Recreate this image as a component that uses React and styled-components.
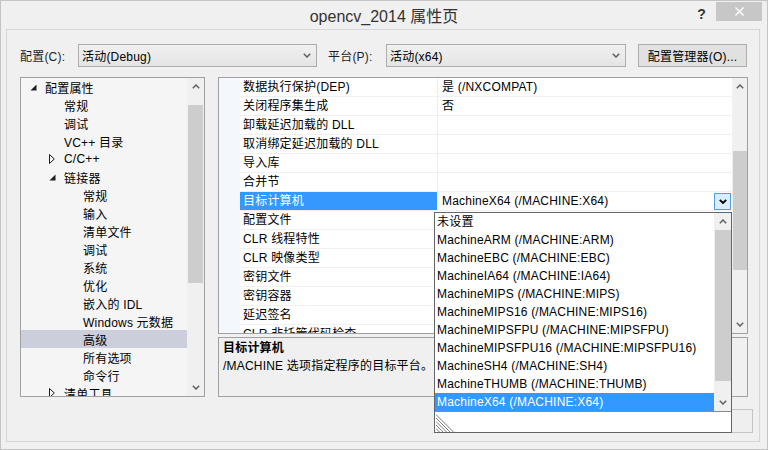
import React from 'react';
import styled, { createGlobalStyle } from 'styled-components';

const FONT = `"Liberation Sans", "Noto Sans CJK SC", sans-serif`;

const Global = createGlobalStyle`
  html, body { margin: 0; padding: 0; background: #f0f0f0; }
  body { font-family: ${FONT}; font-size: 12px; color: #000; letter-spacing: 0.2px; }
  * { box-sizing: border-box; }
`;

const Window = styled.div`
  position: relative;
  width: 768px;
  height: 450px;
  background: #f0f0f0;
  border: 1px solid #c4c4c4;
  display: flex;
  flex-direction: column;
  overflow: hidden;
`;

const TitleBar = styled.div`
  flex: none;
  height: 28px;
  display: grid;
  grid-template-columns: 1fr auto 1fr;
  align-items: start;
`;

const Title = styled.div`
  grid-column: 2;
  font-size: 16px;
  line-height: 20px;
  padding-top: 6px;
  color: #333;
  letter-spacing: 0;
  white-space: nowrap;
`;

const TitleControls = styled.div`
  grid-column: 3;
  justify-self: end;
  display: flex;
  align-items: flex-start;
  padding-top: 1px;
  padding-right: 5px;
`;

const HelpMark = styled.div`
  font-size: 14px;
  font-weight: bold;
  line-height: 18px;
  color: #333;
  margin-right: 10px;
  padding-top: 3px;
`;

const CloseBtn = styled.div`
  width: 46px;
  height: 19px;
  background: #c7c7c7;
  display: flex;
  align-items: center;
  justify-content: center;
`;

const Content = styled.div`
  flex: none;
  height: 413px;
  margin: 0 7px 0 5px;
  border: 1px solid #d6d6d6;
  padding: 14px 6px 0 13px;
  display: flex;
  flex-direction: column;
`;

const TopRow = styled.div`
  display: flex;
  align-items: center;
  height: 23px;
  margin-right: 5px;
`;

const Label = styled.div`
  width: ${p => p.$w}px;
  padding-left: ${p => p.$pl || 0}px;
  flex: none;
  color: #1e1e1e;
  white-space: nowrap;
`;

const Combo = styled.div`
  width: ${p => p.$w}px;
  height: 23px;
  flex: none;
  border: 1px solid #acacac;
  background: linear-gradient(#f0f0f0, #e5e5e5);
  display: flex;
  align-items: center;
  padding: 0 5px 0 3px;
`;

const ComboText = styled.div`
  flex: 1;
  white-space: nowrap;
`;

const PushButton = styled.div`
  width: ${p => p.$w}px;
  height: ${p => p.$h || 23}px;
  margin-left: ${p => p.$ml || 0}px;
  flex: none;
  border: 1px solid ${p => (p.$disabled ? '#c4c4c4' : '#adadad')};
  background: ${p => (p.$disabled ? '#efefef' : '#e1e1e1')};
  color: ${p => (p.$disabled ? '#a0a0a0' : '#000')};
  display: flex;
  align-items: center;
  justify-content: center;
  white-space: nowrap;
`;

const Main = styled.div`
  display: flex;
  margin-top: 10px;
  margin-right: 5px;
  height: 320px;
`;

const TreeBox = styled.div`
  width: 185px;
  height: 320px;
  flex: none;
  border: 1px solid #a0a0a0;
  background: #f5f5f5;
  display: flex;
`;

const TreeBody = styled.div`
  flex: 1;
  overflow: hidden;
`;

const TreeRow = styled.div`
  height: 18px;
  display: flex;
  align-items: center;
  padding-left: ${p => 9 + p.$level * 19}px;
  background: ${p => (p.$sel ? '#cccedb' : 'transparent')};
  white-space: nowrap;
`;

const Twisty = styled.div`
  width: 15px;
  flex: none;
  display: flex;
  align-items: center;
`;

const ScrollBar = styled.div`
  width: ${p => p.$w}px;
  flex: none;
  display: flex;
  flex-direction: column;
  background: #f0f0f0;
`;

const ScrollArrow = styled.div`
  height: 17px;
  flex: none;
  display: flex;
  align-items: center;
  justify-content: center;
`;

const ScrollTrack = styled.div`
  flex: 1;
  display: flex;
  flex-direction: column;
  align-items: center;
`;

const Thumb = styled.div`
  width: ${p => p.$w}px;
  margin-top: ${p => p.$top}px;
  height: ${p => p.$size}px;
  background: #cdcdcd;
`;

const RightCol = styled.div`
  width: 530px;
  margin-left: 13px;
  display: flex;
  flex-direction: column;
`;

const GridBox = styled.div`
  height: 257px;
  border: 1px solid #a0a0a0;
  background: #fff;
  display: flex;
`;

const GridMargin = styled.div`
  width: 21px;
  flex: none;
  background: #f4f7fc;
`;

const GridRows = styled.div`
  flex: 1;
  overflow: hidden;
`;

const GridRow = styled.div`
  display: grid;
  grid-template-columns: 198px 1fr;
  height: 19px;
`;

const NameCell = styled.div`
  border-bottom: 1px solid #f0f0f0;
  border-right: 1px solid #f0f0f0;
  padding-left: 3px;
  line-height: 18px;
  white-space: nowrap;
  overflow: hidden;
  background: ${p => (p.$sel ? '#3399ff' : 'transparent')};
  color: ${p => (p.$sel ? '#fff' : '#000')};
`;

const ValueCell = styled.div`
  border-bottom: 1px solid #f0f0f0;
  padding-left: 4px;
  display: flex;
  align-items: center;
  white-space: nowrap;
  overflow: hidden;
`;

const ValueText = styled.div`
  flex: 1;
  line-height: 18px;
`;

const DropBtn = styled.div`
  width: 17px;
  height: 17px;
  margin-right: 1px;
  margin-top: 1px;
  border: 1px solid #569de5;
  background: #dcecfc;
  display: flex;
  align-items: center;
  justify-content: center;
`;

const Desc = styled.div`
  margin-top: 3px;
  height: 60px;
  border: 1px solid #a0a0a0;
  padding: 1px 4px;
  line-height: 18px;
`;

const DescTitle = styled.div`
  font-weight: bold;
`;

const ButtonRow = styled.div`
  display: flex;
  justify-content: flex-end;
  gap: 9px;
  margin-top: 12px;
`;

const DropList = styled.div`
  position: absolute;
  left: 433px;
  top: 211px;
  width: 298px;
  height: 221px;
  border: 1px solid #646464;
  background: #fff;
  display: flex;
  flex-direction: column;
`;

const DropMain = styled.div`
  height: 198px;
  flex: none;
  display: flex;
`;

const DropItems = styled.div`
  flex: 1;
`;

const DropItem = styled.div`
  height: 18px;
  line-height: 18px;
  padding-left: 2px;
  white-space: nowrap;
  background: ${p => (p.$sel ? '#3399ff' : 'transparent')};
  color: ${p => (p.$sel ? '#fff' : '#000')};
`;

const GripArea = styled.div`
  flex: 1;
  border-top: 1px solid #8a8a8a;
  display: flex;
  align-items: flex-end;
  padding-left: 1px;
`;

const Chevron = ({ dir = 'down', color = '#606060', w = 8, h = 5, sw = 1.5 }) => (
  <svg width={w} height={h} viewBox="0 0 8 5">
    <polyline
      points={dir === 'down' ? '0.8,0.8 4,4 7.2,0.8' : '0.8,4.2 4,1 7.2,4.2'}
      fill="none"
      stroke={color}
      strokeWidth={sw}
    />
  </svg>
);

const Scroll = ({ w, thumbTop, thumbSize, thumbW }) => (
  <ScrollBar $w={w}>
    <ScrollArrow><Chevron dir="up" /></ScrollArrow>
    <ScrollTrack>
      <Thumb $w={thumbW} $top={thumbTop} $size={thumbSize} />
    </ScrollTrack>
    <ScrollArrow><Chevron dir="down" /></ScrollArrow>
  </ScrollBar>
);

const OpenTri = () => (
  <svg width="7" height="7" viewBox="0 0 7 7">
    <polygon points="6.5,0.5 6.5,6.5 0.5,6.5" fill="#1e1e1e" />
  </svg>
);

const ClosedTri = () => (
  <svg width="6" height="10" viewBox="0 0 6 10">
    <polygon points="0.5,0.5 0.5,9.5 5.3,5" fill="none" stroke="#1e1e1e" strokeWidth="1" />
  </svg>
);

const Grip = () => (
  <svg width="18" height="18" viewBox="0 0 18 18">
    {[0, 3.5, 7, 10.5, 14].map(y => (
      <line key={y} x1="0" y1={y + 0.5} x2={17.5 - y} y2="18" stroke="#7a7a7a" strokeWidth="1" />
    ))}
  </svg>
);

const tree = [
  { l: 0, t: '配置属性', tri: 'open' },
  { l: 1, t: '常规' },
  { l: 1, t: '调试' },
  { l: 1, t: 'VC++ 目录' },
  { l: 1, t: 'C/C++', tri: 'closed' },
  { l: 1, t: '链接器', tri: 'open' },
  { l: 2, t: '常规' },
  { l: 2, t: '输入' },
  { l: 2, t: '清单文件' },
  { l: 2, t: '调试' },
  { l: 2, t: '系统' },
  { l: 2, t: '优化' },
  { l: 2, t: '嵌入的 IDL' },
  { l: 2, t: 'Windows 元数据' },
  { l: 2, t: '高级', sel: true },
  { l: 2, t: '所有选项' },
  { l: 2, t: '命令行' },
  { l: 1, t: '清单工具', tri: 'closed' },
];

const props = [
  ['数据执行保护(DEP)', '是 (/NXCOMPAT)'],
  ['关闭程序集生成', '否'],
  ['卸载延迟加载的 DLL', ''],
  ['取消绑定延迟加载的 DLL', ''],
  ['导入库', ''],
  ['合并节', ''],
  ['目标计算机', 'MachineX64 (/MACHINE:X64)', true],
  ['配置文件', ''],
  ['CLR 线程特性', ''],
  ['CLR 映像类型', ''],
  ['密钥文件', ''],
  ['密钥容器', ''],
  ['延迟签名', ''],
  ['CLR 非托管代码检查', ''],
];

const options = [
  '未设置',
  'MachineARM (/MACHINE:ARM)',
  'MachineEBC (/MACHINE:EBC)',
  'MachineIA64 (/MACHINE:IA64)',
  'MachineMIPS (/MACHINE:MIPS)',
  'MachineMIPS16 (/MACHINE:MIPS16)',
  'MachineMIPSFPU (/MACHINE:MIPSFPU)',
  'MachineMIPSFPU16 (/MACHINE:MIPSFPU16)',
  'MachineSH4 (/MACHINE:SH4)',
  'MachineTHUMB (/MACHINE:THUMB)',
  'MachineX64 (/MACHINE:X64)',
];

export default function App() {
  return (
    <>
      <Global />
      <Window>
        <TitleBar>
          <Title>opencv_2014 属性页</Title>
          <TitleControls>
            <HelpMark>?</HelpMark>
            <CloseBtn>
              <svg width="9" height="9" viewBox="0 0 9 9">
                <line x1="0.5" y1="0.5" x2="8.5" y2="8.5" stroke="#fff" strokeWidth="1.4" />
                <line x1="8.5" y1="0.5" x2="0.5" y2="8.5" stroke="#fff" strokeWidth="1.4" />
              </svg>
            </CloseBtn>
          </TitleControls>
        </TitleBar>
        <Content>
          <TopRow>
            <Label $w={58}>配置(C):</Label>
            <Combo $w={239}>
              <ComboText>活动(Debug)</ComboText>
              <Chevron />
            </Combo>
            <Label $w={69} $pl={11}>平台(P):</Label>
            <Combo $w={240}>
              <ComboText>活动(x64)</ComboText>
              <Chevron />
            </Combo>
            <PushButton $w={109} $ml={12}>配置管理器(O)...</PushButton>
          </TopRow>
          <Main>
            <TreeBox>
              <TreeBody>
                {tree.map((n, i) => (
                  <TreeRow key={i} $level={n.l} $sel={n.sel}>
                    <Twisty>
                      {n.tri === 'open' && <OpenTri />}
                      {n.tri === 'closed' && <ClosedTri />}
                    </Twisty>
                    {n.t}
                  </TreeRow>
                ))}
              </TreeBody>
              <Scroll w={17} thumbW={15} thumbTop={10} thumbSize={178} />
            </TreeBox>
            <RightCol>
              <GridBox>
                <GridMargin />
                <GridRows>
                  {props.map(([name, value, sel], i) => (
                    <GridRow key={i}>
                      <NameCell $sel={sel}>{name}</NameCell>
                      <ValueCell>
                        <ValueText>{value}</ValueText>
                        {sel && (
                          <DropBtn>
                            <Chevron color="#000" sw={1.8} />
                          </DropBtn>
                        )}
                      </ValueCell>
                    </GridRow>
                  ))}
                </GridRows>
                <Scroll w={15} thumbW={14} thumbTop={56} thumbSize={119} />
              </GridBox>
              <Desc>
                <DescTitle>目标计算机</DescTitle>
                <div>/MACHINE 选项指定程序的目标平台。</div>
              </Desc>
            </RightCol>
          </Main>
          <ButtonRow>
            <PushButton $w={86} $h={24}>确定</PushButton>
            <PushButton $w={86} $h={24}>取消</PushButton>
            <PushButton $w={86} $h={24} $disabled>应用(A)</PushButton>
          </ButtonRow>
        </Content>
        <DropList>
          <DropMain>
            <DropItems>
              {options.map((o, i) => (
                <DropItem key={i} $sel={i === options.length - 1}>{o}</DropItem>
              ))}
            </DropItems>
            <Scroll w={17} thumbW={16} thumbTop={0} thumbSize={151} />
          </DropMain>
          <GripArea>
            <Grip />
          </GripArea>
        </DropList>
      </Window>
    </>
  );
}
